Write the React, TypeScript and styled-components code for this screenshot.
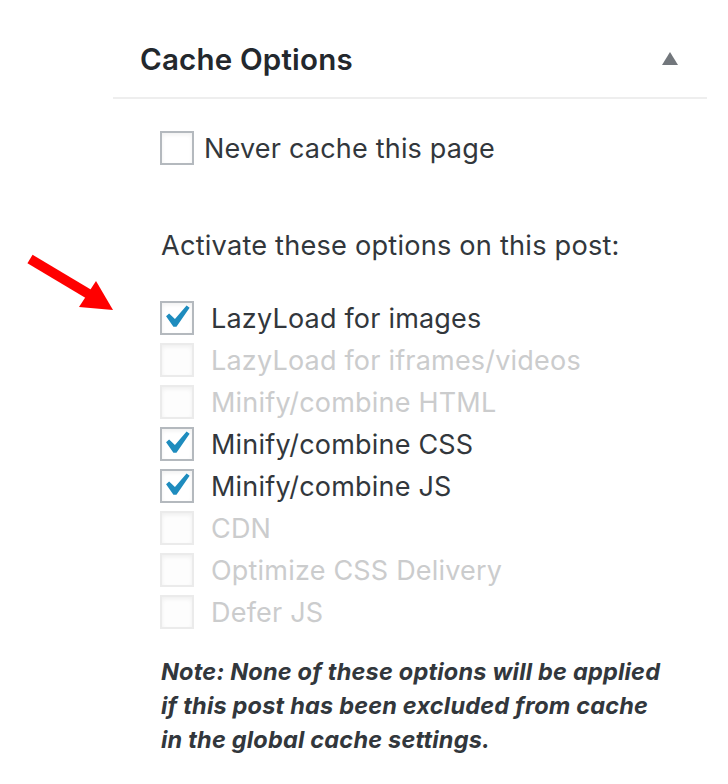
import React from "react";
import styled, { createGlobalStyle } from "styled-components";

const GlobalStyle = createGlobalStyle`
  html, body { margin: 0; padding: 0; background: #ffffff; }
  body { font-family: Inter, "Liberation Sans", sans-serif; color: #32373c; }
`;

const Page = styled.div`
  position: relative;
  width: 728px;
  height: 784px;
  overflow: hidden;
  background: #fff;
`;

const Arrow = styled.svg`
  position: absolute;
  left: 0;
  top: 0;
`;

const Panel = styled.section`
  margin-left: 113px;
  width: 594px;
`;

const Header = styled.div`
  display: flex;
  align-items: center;
  justify-content: space-between;
  height: 77px;
  padding: 20px 29px 0 27px;
  border-bottom: 2px solid #eeeeee;
`;

const Title = styled.h2`
  margin: 0;
  font-size: 29.5px;
  font-weight: 600;
  color: #23282d;
  letter-spacing: 0.2px;
`;

const Toggle = styled.span`
  width: 0;
  height: 0;
  border-left: 8.5px solid transparent;
  border-right: 8.5px solid transparent;
  border-bottom: 13px solid #72777c;
`;

const Body = styled.div`
  padding: 32px 0 0 47px;
`;

const OptionRow = styled.label<{ $disabled?: boolean; $gap?: number }>`
  display: flex;
  align-items: center;
  gap: ${(p) => p.$gap ?? 17}px;
  height: 34px;
  font-size: 27px;
  letter-spacing: 0.2px;
  color: ${(p) => (p.$disabled ? "#cbcccd" : "#32373c")};
`;

const Box = styled.span<{ $disabled?: boolean }>`
  position: relative;
  flex: none;
  box-sizing: border-box;
  width: 34px;
  height: 34px;
  border: 2px solid ${(p) => (p.$disabled ? "#ebebeb" : "#b4b9be")};
  background: ${(p) => (p.$disabled ? "#fdfdfd" : "#fff")};
  box-shadow: inset 0 2px 4px rgba(0, 0, 0, 0.06);
`;

const Check = styled.svg`
  position: absolute;
  left: -2px;
  top: -2px;
`;

const Lead = styled.p`
  margin: 64px 0 0 1px;
  font-size: 27.2px;
  letter-spacing: 0.2px;
  color: #32373c;
  line-height: 34px;
`;

const OptionList = styled.div`
  display: flex;
  flex-direction: column;
  gap: 8px;
  margin-top: 38px;
`;

const Note = styled.p`
  margin: 26px 0 0 1px;
  font-size: 23.5px;
  font-weight: 700;
  font-style: italic;
  line-height: 34px;
  color: #32373c;
  letter-spacing: 0.2px;
`;

const options: { label: string; checked: boolean }[] = [
  { label: "LazyLoad for images", checked: true },
  { label: "LazyLoad for iframes/videos", checked: false },
  { label: "Minify/combine HTML", checked: false },
  { label: "Minify/combine CSS", checked: true },
  { label: "Minify/combine JS", checked: true },
  { label: "CDN", checked: false },
  { label: "Optimize CSS Delivery", checked: false },
  { label: "Defer JS", checked: false },
];

function Checkbox({ checked, disabled }: { checked?: boolean; disabled?: boolean }) {
  return (
    <Box $disabled={disabled}>
      {checked && (
        <Check width="34" height="34" viewBox="3.1 2.9 15 15">
          <path
            fill="#1e8cbe"
            d="M14.83 4.89l1.34.94-5.81 8.38H9.02L5.78 9.67l1.34-1.25 2.57 2.4z"
          />
        </Check>
      )}
    </Box>
  );
}

export default function App() {
  return (
    <Page>
      <GlobalStyle />
      <Arrow width="130" height="330" viewBox="0 0 130 330">
        <line x1="30" y1="259" x2="92" y2="296" stroke="#ff0000" strokeWidth="10" />
        <polygon points="113,310 79,307 96,281" fill="#ff0000" />
      </Arrow>
      <Panel>
        <Header>
          <Title>Cache Options</Title>
          <Toggle />
        </Header>
        <Body>
          <OptionRow $gap={10}>
            <Checkbox />
            Never cache this page
          </OptionRow>
          <Lead>Activate these options on this post:</Lead>
          <OptionList>
            {options.map((o) => (
              <OptionRow key={o.label} $disabled={!o.checked}>
                <Checkbox checked={o.checked} disabled={!o.checked} />
                {o.label}
              </OptionRow>
            ))}
          </OptionList>
          <Note>
            Note: None of these options will be applied
            <br />
            if this post has been excluded from cache
            <br />
            in the global cache settings.
          </Note>
        </Body>
      </Panel>
    </Page>
  );
}
